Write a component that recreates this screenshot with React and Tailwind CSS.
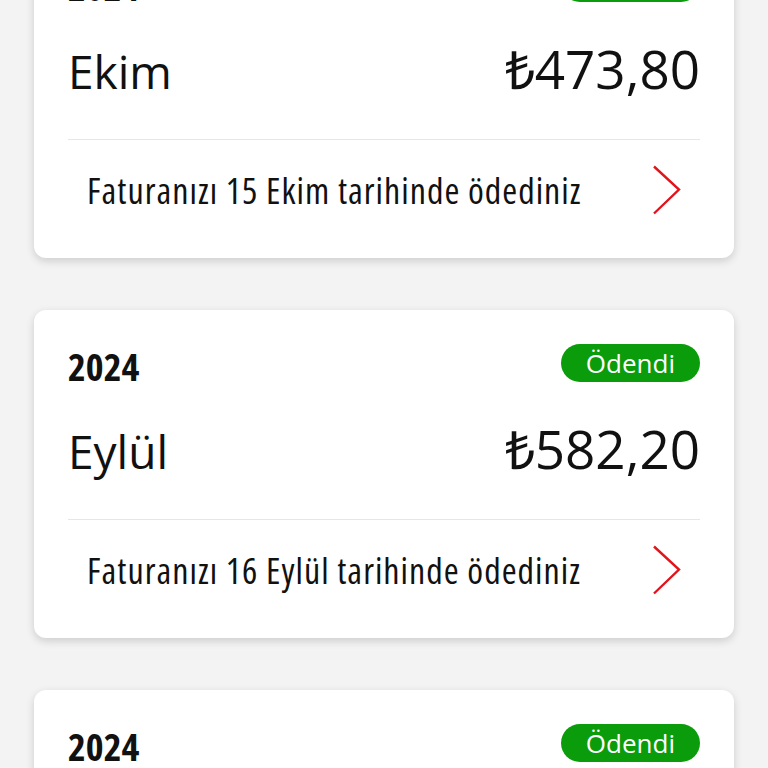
const BILLS = [
  { year: '2024', month: 'Ekim', amount: '₺473,80', note: 'Faturanızı 15 Ekim tarihinde ödediniz' },
  { year: '2024', month: 'Eylül', amount: '₺582,20', note: 'Faturanızı 16 Eylül tarihinde ödediniz' },
  { year: '2024', month: 'Ağustos', amount: '₺521,40', note: 'Faturanızı 14 Ağustos tarihinde ödediniz' },
];

function Chevron() {
  return (
    <svg width="30" height="50" viewBox="0 0 30 50" fill="none" className="mr-[18px] shrink-0">
      <polyline points="2,1.5 27,24.5 2,48.5" stroke="#e1141c" strokeWidth="2.4" strokeLinejoin="miter" />
    </svg>
  );
}

function BillCard({ bill }) {
  return (
    <div className="bg-white rounded-xl shadow-[0_3px_8px_rgba(0,0,0,0.16)] px-[34px] pt-[34px] pb-[19px]">
      <div className="flex items-start justify-between">
        <span className="pt-[3px] text-[38px] leading-none font-bold font-stretch-condensed text-[#111]">{bill.year}</span>
        <span className="h-[38px] px-[25px] rounded-full bg-[#0a9c0a] text-white text-[26px] leading-[38px]">
          Ödendi
        </span>
      </div>
      <div className="mt-[37px] flex items-baseline justify-between text-[#111]">
        <span className="text-[46px] leading-none">{bill.month}</span>
        <span className="text-[53px] leading-none">{bill.amount}</span>
      </div>
      <div className="mt-[44px] h-px bg-[#e6e6e6]" />
      <div className="h-[99px] flex items-center justify-between pl-[19px]">
        <span className="pt-[3px] text-[36px] leading-none tracking-[1px] font-stretch-condensed text-[#111]">{bill.note}</span>
        <Chevron />
      </div>
    </div>
  );
}

export default function App() {
  return (
    <div className="min-h-screen bg-[#f3f3f3] overflow-hidden font-['Open_Sans',sans-serif]">
      <div className="-mt-[70px] px-[34px] flex flex-col gap-[52px]">
        {BILLS.map((b) => (
          <BillCard key={b.month} bill={b} />
        ))}
      </div>
    </div>
  );
}
